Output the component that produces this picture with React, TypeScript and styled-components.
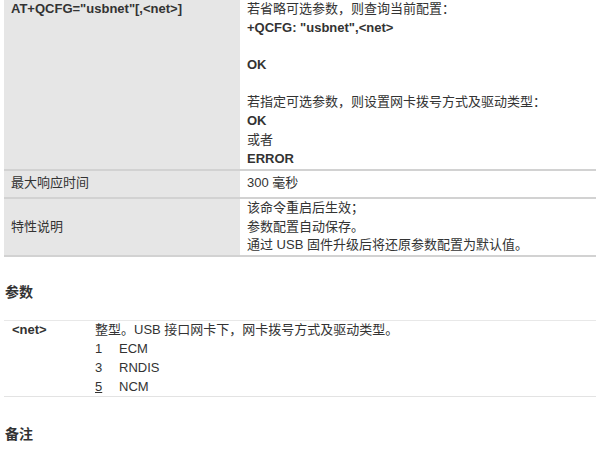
import React from 'react'
import styled, { createGlobalStyle } from 'styled-components'

const GlobalStyle = createGlobalStyle`
  body {
    margin: 0;
    background: #ffffff;
    color: #333333;
    font-family: 'Liberation Sans', Arial, 'Noto Sans CJK SC', sans-serif;
    font-size: 13px;
  }
`

const Page = styled.div`
  padding: 0 4px;
  width: 592px;
`

const SpecTable = styled.div`
  display: grid;
  grid-template-columns: 236px 1fr;
  border-bottom: 2px solid #d2d2d2;
`

const KeyCell = styled.div<{ $pad: string; $middle?: boolean }>`
  background: #e6e6e6;
  padding: ${(p) => p.$pad};
  line-height: 18.7px;
  display: flex;
  align-items: ${(p) => (p.$middle ? 'center' : 'flex-start')};
`

const ValueCell = styled.div<{ $pad: string }>`
  padding: ${(p) => p.$pad};
  line-height: 18.7px;
`

const Sep = styled.div`
  grid-column: 1 / 3;
  height: 2px;
  background: #d2d2d2;
`

const Bold = styled.div`
  font-weight: bold;
`

const Line = styled.div`
  min-height: 18.7px;
`

const Heading = styled.h3<{ $top: number }>`
  margin: 0;
  padding: ${(p) => p.$top}px 1px 0;
  font-size: 14px;
  font-weight: bold;
  line-height: 20px;
`

const ParamTable = styled.div`
  display: grid;
  grid-template-columns: 91px 1fr;
  margin-top: 18px;
  border-top: 1px solid #e8e8e8;
  border-bottom: 1px solid #e3e3e3;
`

const ParamName = styled.div`
  font-weight: bold;
  padding-left: 8px;
  line-height: 18.8px;
`

const ParamDesc = styled.div`
  line-height: 18.8px;
`

const ValueRow = styled.div`
  display: flex;
`

const ValueNum = styled.span<{ $underline?: boolean }>`
  width: 24px;
  text-decoration: ${(p) => (p.$underline ? 'underline' : 'none')};
`

export default function App() {
  return (
    <Page>
      <GlobalStyle />
      <SpecTable>
        <KeyCell $pad="0 7px 1px">
          <Bold>AT+QCFG="usbnet"[,&lt;net&gt;]</Bold>
        </KeyCell>
        <ValueCell $pad="0 7px 1px">
          <Line>若省略可选参数，则查询当前配置：</Line>
          <Bold>+QCFG: "usbnet",&lt;net&gt;</Bold>
          <Line />
          <Bold>OK</Bold>
          <Line />
          <Line>若指定可选参数，则设置网卡拨号方式及驱动类型：</Line>
          <Bold>OK</Bold>
          <Line>或者</Line>
          <Bold>ERROR</Bold>
        </ValueCell>
        <Sep />
        <KeyCell $pad="3px 7px 4px">最大响应时间</KeyCell>
        <ValueCell $pad="3px 7px 4px">300 毫秒</ValueCell>
        <Sep />
        <KeyCell $pad="0 7px" $middle>
          特性说明
        </KeyCell>
        <ValueCell $pad="0 7px">
          <Line>该命令重启后生效；</Line>
          <Line>参数配置自动保存。</Line>
          <Line>通过 USB 固件升级后将还原参数配置为默认值。</Line>
        </ValueCell>
      </SpecTable>

      <Heading $top={25}>参数</Heading>
      <ParamTable>
        <ParamName>&lt;net&gt;</ParamName>
        <ParamDesc>
          <div>整型。USB 接口网卡下，网卡拨号方式及驱动类型。</div>
          <ValueRow>
            <ValueNum>1</ValueNum>
            <span>ECM</span>
          </ValueRow>
          <ValueRow>
            <ValueNum>3</ValueNum>
            <span>RNDIS</span>
          </ValueRow>
          <ValueRow>
            <ValueNum $underline>5</ValueNum>
            <span>NCM</span>
          </ValueRow>
        </ParamDesc>
      </ParamTable>

      <Heading $top={27}>备注</Heading>
    </Page>
  )
}
